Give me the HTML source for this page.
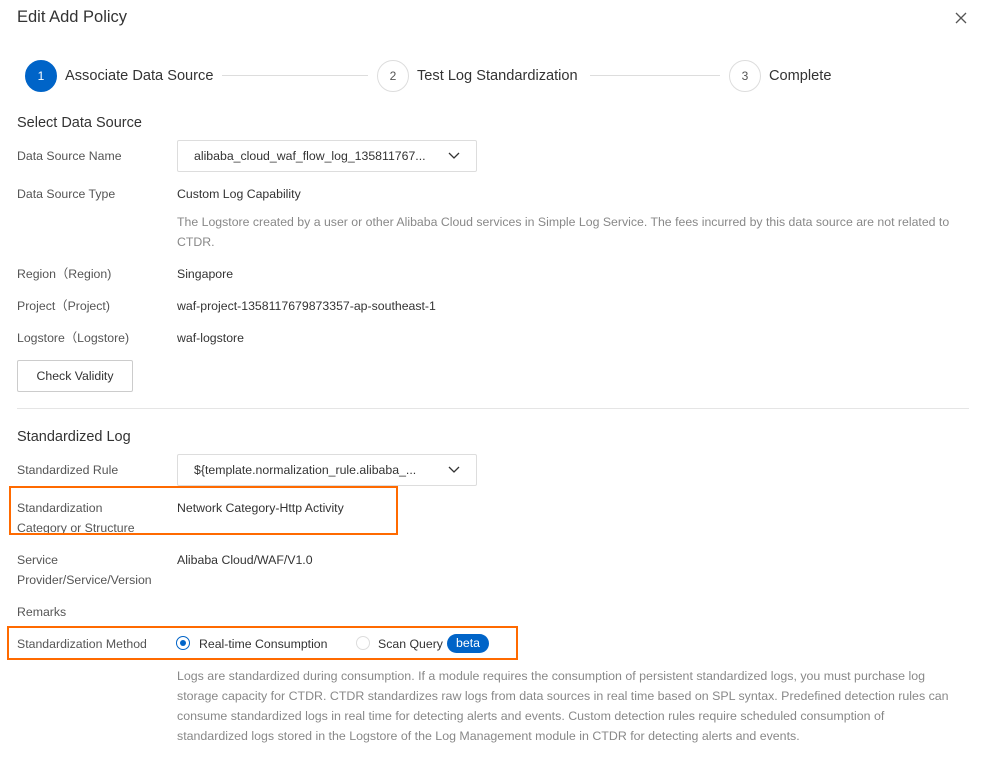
<!DOCTYPE html>
<html><head><style>
body{margin:0;width:992px;height:782px;background:#fff;font-family:"Liberation Sans","Noto Sans CJK SC",sans-serif;color:#333;position:relative;overflow:hidden}
.a{position:absolute;white-space:nowrap;line-height:16px}
.l{font-size:12.3px;color:#555}
.v{font-size:12.3px;color:#333}
.sel{position:absolute;left:177px;width:300px;height:32px;border:1px solid #ddd;border-radius:2px;box-sizing:border-box;font-size:12.3px;color:#333;line-height:30px;padding-left:16px}
.sel svg{position:absolute;right:16px;top:11px}
.circ{position:absolute;width:32px;height:32px;border-radius:50%;box-sizing:border-box;border:1px solid #ddd;text-align:center;line-height:30px;font-size:12px;color:#555}
.line{position:absolute;height:1px;background:#ddd;top:75px}
.st{font-size:14.6px;color:#333;line-height:18px}
.box{position:absolute;border:2px solid #ff6a00;box-sizing:border-box}
</style></head><body>
<div class="a" style="left:17px;top:7px;font-size:16.5px;line-height:20px;color:#333">Edit Add Policy</div>
<svg class="a" style="left:955px;top:12px" width="12" height="12"><path d="M1 1L11 11M11 1L1 11" stroke="#555" stroke-width="1.3"/></svg>

<div class="circ" style="left:25px;top:60px;background:#0064c8;border-color:#0064c8;color:#fff">1</div>
<div class="a st" style="left:65px;top:67px">Associate Data Source</div>
<div class="line" style="left:222px;width:146px"></div>
<div class="circ" style="left:377px;top:60px">2</div>
<div class="a st" style="left:417px;top:67px">Test Log Standardization</div>
<div class="line" style="left:590px;width:130px"></div>
<div class="circ" style="left:729px;top:60px">3</div>
<div class="a st" style="left:769px;top:67px">Complete</div>

<div class="a" style="left:17px;top:114px;font-size:14.5px;line-height:18px">Select Data Source</div>
<div class="a l" style="left:17px;top:148px">Data Source Name</div>
<div class="sel" style="top:140px">alibaba_cloud_waf_flow_log_135811767...<svg width="12" height="8"><path d="M1 1L6 6L11 1" stroke="#333" fill="none" stroke-width="1.3"/></svg></div>
<div class="a l" style="left:17px;top:186px">Data Source Type</div>
<div class="a v" style="left:177px;top:186px">Custom Log Capability</div>
<div class="a" style="left:177px;top:212px;font-size:12.3px;color:#888;line-height:20px;white-space:normal;width:790px">The Logstore created by a user or other Alibaba Cloud services in Simple Log Service. The fees incurred by this data source are not related to CTDR.</div>
<div class="a l" style="left:17px;top:266px">Region（Region)</div>
<div class="a v" style="left:177px;top:266px">Singapore</div>
<div class="a l" style="left:17px;top:298px">Project（Project)</div>
<div class="a v" style="left:177px;top:298px">waf-project-1358117679873357-ap-southeast-1</div>
<div class="a l" style="left:17px;top:330px">Logstore（Logstore)</div>
<div class="a v" style="left:177px;top:330px">waf-logstore</div>
<div class="a" style="left:17px;top:360px;width:116px;height:32px;border:1px solid #ccc;border-radius:2px;box-sizing:border-box;font-size:12.3px;text-align:center;line-height:30px">Check Validity</div>
<div class="a" style="left:17px;top:408px;width:952px;height:1px;background:#e5e5e5"></div>

<div class="a" style="left:17px;top:428px;font-size:14.5px;line-height:18px">Standardized Log</div>
<div class="a l" style="left:17px;top:462px">Standardized Rule</div>
<div class="sel" style="top:454px">${template.normalization_rule.alibaba_...<svg width="12" height="8"><path d="M1 1L6 6L11 1" stroke="#333" fill="none" stroke-width="1.3"/></svg></div>
<div class="a l" style="left:17px;top:498px;line-height:20px">Standardization<br>Category or Structure</div>
<div class="a v" style="left:177px;top:500px">Network Category-Http Activity</div>
<div class="box" style="left:9px;top:486px;width:389px;height:49px"></div>
<div class="a l" style="left:17px;top:550px;line-height:20px">Service<br>Provider/Service/Version</div>
<div class="a v" style="left:177px;top:552px">Alibaba Cloud/WAF/V1.0</div>
<div class="a l" style="left:17px;top:604px">Remarks</div>
<div class="a l" style="left:17px;top:636px">Standardization Method</div>
<div class="a" style="left:176px;top:636px;width:14px;height:14px;border:1px solid #0064c8;border-radius:50%;box-sizing:border-box"><div style="margin:3px;width:6px;height:6px;border-radius:50%;background:#0064c8"></div></div>
<div class="a v" style="left:199px;top:636px">Real-time Consumption</div>
<div class="a" style="left:356px;top:636px;width:14px;height:14px;border:1px solid #ddd;border-radius:50%;box-sizing:border-box"></div>
<div class="a v" style="left:378px;top:636px">Scan Query</div>
<div class="a" style="left:447px;top:634px;width:42px;height:19px;border-radius:10px;background:#0064c8;color:#fff;font-size:12.3px;text-align:center;line-height:19px">beta</div>
<div class="box" style="left:7px;top:626px;width:511px;height:34px"></div>
<div class="a" style="left:177px;top:666px;font-size:12.4px;color:#888;line-height:20px;white-space:normal;width:777px">Logs are standardized during consumption. If a module requires the consumption of persistent standardized logs, you must purchase log storage capacity for CTDR. CTDR standardizes raw logs from data sources in real time based on SPL syntax. Predefined detection rules can consume standardized logs in real time for detecting alerts and events. Custom detection rules require scheduled consumption of standardized logs stored in the Logstore of the Log Management module in CTDR for detecting alerts and events.</div>
</body></html>
